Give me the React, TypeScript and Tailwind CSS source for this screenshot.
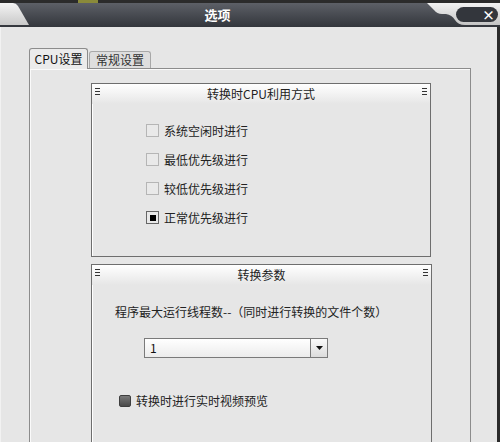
import React from 'react';

const font = { fontFamily: '"Noto Sans CJK SC", "Noto Sans", sans-serif' };

function Grip() {
  return (
    <div className="flex flex-col gap-[2px] pt-[1px]">
      <span className="block h-[1px] w-[5px] bg-[#333]" />
      <span className="block h-[1px] w-[5px] bg-[#333]" />
      <span className="block h-[1px] w-[5px] bg-[#333]" />
    </div>
  );
}

function PanelHeader({ title }: { title: string }) {
  return (
    <div className="flex h-[20px] items-start justify-between bg-gradient-to-b from-white to-[#e6e6e6] px-[3px] pt-[3px]">
      <Grip />
      <span className="text-[12px] leading-[14px] text-[#222]">{title}</span>
      <Grip />
    </div>
  );
}

function Check({ label, checked }: { label: string; checked?: boolean }) {
  return (
    <div className="flex h-[13px] items-center gap-[5px]">
      <span
        className={`flex h-[13px] w-[13px] items-center justify-center border bg-[#e9e9e9] ${
          checked ? 'border-[#666]' : 'border-[#b5b5b5]'
        }`}
      >
        {checked && <span className="block h-[6px] w-[6px] bg-black" />}
      </span>
      <span className="text-[12px] leading-none text-[#222]">{label}</span>
    </div>
  );
}

export default function App() {
  return (
    <div className="flex h-[442px] w-[500px] flex-col overflow-hidden bg-[#e6e6e6]" style={font}>
      {/* strip of the window behind */}
      <div className="flex h-[3px] bg-[#2b2b2b]">
        <div className="ml-[78px] h-full w-[20px] bg-[#8a8a3a]" />
      </div>

      {/* title bar */}
      <div className="flex h-[24px] bg-gradient-to-b from-[#5d6067] to-[#33363c]">
        <svg width="30" height="24" viewBox="0 0 30 24" className="shrink-0">
          <defs>
            <linearGradient id="lc" x1="0" y1="0" x2="0" y2="1">
              <stop offset="0" stopColor="#f4f4f4" />
              <stop offset="1" stopColor="#c9c9c9" />
            </linearGradient>
          </defs>
          <path d="M0 0 H13 Q16 0 18 3 L29 22 H0 Z" fill="url(#lc)" />
        </svg>
        <div className="flex flex-1 items-center justify-center pb-[1px] pr-[22px]">
          <span className="text-[13px] font-bold leading-none text-white">选项</span>
        </div>
        <div className="relative w-[73px] shrink-0">
          <svg width="73" height="24" viewBox="0 0 73 24" className="block">
            <defs>
              <linearGradient id="rc" x1="0" y1="0" x2="0" y2="1">
                <stop offset="0" stopColor="#f2f2f2" />
                <stop offset="1" stopColor="#c4c4c4" />
              </linearGradient>
            </defs>
            <path d="M0 0 H73 V22 H38 Q31 22 28 17 Q25 12 19 11 H15 Q10 11 7 7 Z" fill="url(#rc)" />
            <rect x="29" y="4" width="42" height="15" rx="7.5" fill="#33363c" />
          </svg>
          <span className="absolute right-[5px] top-[4px] text-[13px] font-bold leading-[15px] text-white">×</span>
        </div>
      </div>

      {/* body */}
      <div className="flex flex-1 border-l border-r-[3px] border-l-[#f2f2f2] border-r-[#2b2b2b] pl-[28px] pt-[21px]">
        <div className="flex w-[442px] flex-col">
          {/* tabs */}
          <div className="flex items-end">
            <div className="z-10 -mb-[1px] flex h-[21px] w-[59px] items-center justify-center rounded-t-[3px] border border-b-0 border-[#8c8c8c] bg-[#ebebeb] text-[12px] leading-none text-[#111]">
              CPU设置
            </div>
            <div className="ml-[1px] flex h-[17px] w-[62px] items-center justify-center rounded-t-[3px] border border-b-0 border-[#a8a8a8] bg-[#dedede] text-[12px] leading-none text-[#333]">
              常规设置
            </div>
          </div>

          {/* tab page */}
          <div className="flex flex-1 flex-col gap-[7px] border border-b-0 border-[#8c8c8c] pl-[61px] pt-[14px] shadow-[inset_1px_1px_0_#fafafa]">
            <div className="flex h-[174px] w-[340px] flex-col border border-[#6e6e6e] shadow-[inset_1px_1px_0_#fff]">
              <PanelHeader title="转换时CPU利用方式" />
              <div className="flex flex-col gap-[16px] pl-[54px] pt-[20px]">
                <Check label="系统空闲时进行" />
                <Check label="最低优先级进行" />
                <Check label="较低优先级进行" />
                <Check label="正常优先级进行" checked />
              </div>
            </div>

            <div className="flex flex-1 w-[341px] flex-col border border-b-0 border-[#6e6e6e] shadow-[inset_1px_1px_0_#fff]">
              <PanelHeader title="转换参数" />
              <div className="pl-[23px] pt-[21px] text-[12px] leading-none text-[#222]">
                程序最大运行线程数--（同时进行转换的文件个数）
              </div>
              <div className="ml-[52px] mt-[20px] flex h-[20px] w-[184px] border border-[#7a7a7a] bg-gradient-to-b from-white to-[#ececec]">
                <span className="flex-1 pl-[5px] text-[12px] leading-[18px] text-[#111]">1</span>
                <span className="flex w-[17px] items-center justify-center border-l border-[#7a7a7a] bg-gradient-to-b from-[#fafafa] to-[#dcdcdc]">
                  <svg width="7" height="4" viewBox="0 0 7 4">
                    <path d="M0 0 H7 L3.5 4 Z" fill="#111" />
                  </svg>
                </span>
              </div>
              <div className="ml-[27px] mt-[37px] flex items-center gap-[5px]">
                <span className="block h-[12px] w-[12px] rounded-[2px] border border-[#3e3e3e] bg-gradient-to-b from-[#7a7a7a] to-[#4a4a4a]" />
                <span className="text-[12px] leading-none text-[#222]">转换时进行实时视频预览</span>
              </div>
            </div>
          </div>
        </div>
      </div>
    </div>
  );
}
